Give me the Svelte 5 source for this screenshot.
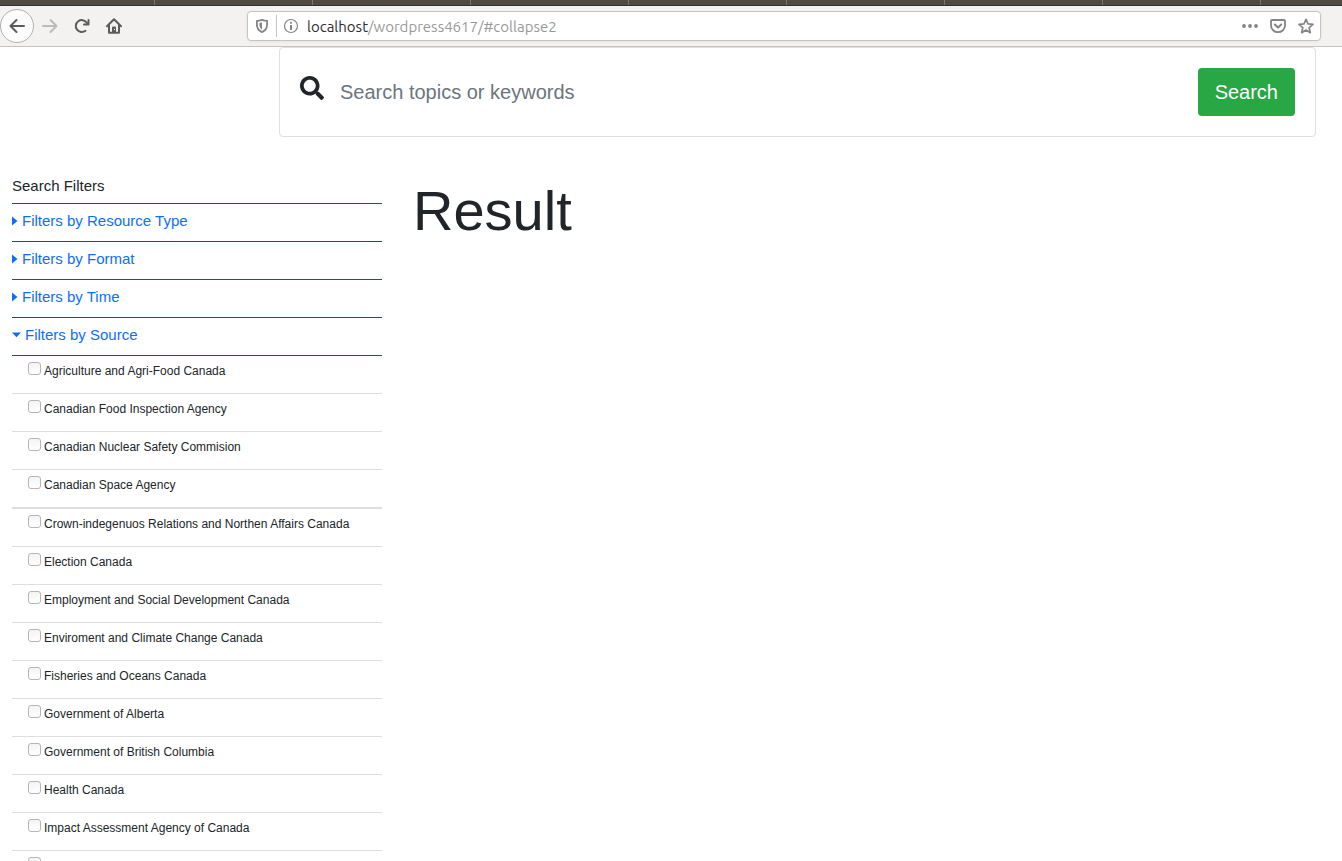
<script>
  const collapsed = ['Filters by Resource Type', 'Filters by Format', 'Filters by Time'];

  const groups = [
    [
      'Agriculture and Agri-Food Canada',
      'Canadian Food Inspection Agency',
      'Canadian Nuclear Safety Commision',
      'Canadian Space Agency',
    ],
    [
      'Crown-indegenuos Relations and Northen Affairs Canada',
      'Election Canada',
      'Employment and Social Development Canada',
      'Enviroment and Climate Change Canada',
      'Fisheries and Oceans Canada',
      'Government of Alberta',
      'Government of British Columbia',
      'Health Canada',
      'Impact Assessment Agency of Canada',
      '',
    ],
  ];
</script>

<div class="window">
  <div class="tabs"></div>

  <header class="toolbar">
    <nav class="nav" aria-label="Browser">
      <button class="back" aria-label="Back">
        <svg width="16" height="16" viewBox="0 0 16 16"><path d="M15 8H2M7.500 2L1.500 8l6 6" fill="none" stroke="#5c5c5b" stroke-width="2" stroke-linecap="round" stroke-linejoin="round" /></svg>
      </button>
      <button aria-label="Forward">
        <svg width="16" height="16" viewBox="0 0 16 16"><path d="M1 8h13M8.500 2l6 6-6 6" fill="none" stroke="#bcbbba" stroke-width="2" stroke-linecap="round" stroke-linejoin="round" /></svg>
      </button>
      <button aria-label="Reload">
        <svg width="16" height="16" viewBox="0 0 16 16" fill="none" stroke="#5c5c5b" stroke-width="2" stroke-linecap="round" stroke-linejoin="round"><path d="M11.500 12.800A6 6 0 1 1 12.700 4.600L14 6" /><path d="M14.500 2v4.500H10" /></svg>
      </button>
      <button aria-label="Home">
        <svg width="16" height="16" viewBox="0 0 16 16"><path d="M1 8.300L8 1.300l7 7M3 7v7.800h10V7" fill="none" stroke="#5c5c5b" stroke-width="2" stroke-linecap="round" stroke-linejoin="round" /><path d="M6 15V9.500Q6 8.500 7 8.500h2Q10 8.500 10 9.500V15z" fill="#5c5c5b" /><path d="M8.500 10.800v1.200" stroke="#f3f2f0" /></svg>
      </button>
    </nav>

    <div class="address">
      <svg width="14" height="16" viewBox="0 0 14 16"><path d="M7 1.800C5.500 2.300 3.700 2.700 1.900 2.800v3.700c0 3.400 1.600 6.100 5.100 7.600 3.500-1.500 5.100-4.200 5.100-7.600V2.800C10.300 2.700 8.500 2.300 7 1.800z" fill="none" stroke="#858584" stroke-width="1.800" stroke-linejoin="round" /><path d="M7 4.500v7.200C5 10.400 4.400 8.500 4.400 6.500V5z" fill="#858584" /></svg>
      <span class="divider"></span>
      <svg width="16" height="16" viewBox="0 0 16 16"><circle cx="8" cy="8" r="6.500" fill="none" stroke="#858584" stroke-width="1.200" /><circle cx="8" cy="4.800" r="1.100" fill="#858584" /><path d="M8 7v5" stroke="#858584" stroke-width="2" /></svg>
      <span class="url"><b>localhost</b>/wordpress4617/#collapse2</span>
      <div class="actions">
        <svg width="16" height="16" viewBox="0 0 16 16" fill="#858584"><circle cx="2" cy="8" r="1.900" /><circle cx="8" cy="8" r="1.900" /><circle cx="14" cy="8" r="1.900" /></svg>
        <svg width="16" height="16" viewBox="0 0 16 16" fill="none" stroke="#858584" stroke-linecap="round" stroke-linejoin="round"><path d="M2 2h12q1 0 1 1v4.500a7 6.700 0 0 1-14 0V3q0-1 1-1z" stroke-width="1.800" /><path d="M4.800 6.500L8 9.500l3.200-3" stroke-width="2" /></svg>
        <svg width="16" height="16" viewBox="0 0 16 16"><path d="M8 1.300l2 4.600 5 .5-3.800 3.300 1.100 5L8 12.100l-4.300 2.600 1.100-5L1 6.400l5-.5z" fill="none" stroke="#858584" stroke-width="1.700" stroke-linejoin="round" /></svg>
      </div>
    </div>
  </header>

  <form class="search" onsubmit={(e) => e.preventDefault()}>
    <svg class="glass" width="24" height="24" viewBox="0 0 512 512" fill="#212529"><path d="M505 442.700L405.300 343c-4.500-4.500-10.600-7-17-7H372c27.600-35.300 44-79.700 44-128C416 93.100 322.900 0 208 0S0 93.100 0 208s93.100 208 208 208c48.300 0 92.700-16.400 128-44v16.300c0 6.400 2.500 12.500 7 17l99.700 99.700c9.400 9.400 24.600 9.400 33.900 0l28.300-28.300c9.400-9.400 9.400-24.600.1-34zM208 336c-70.700 0-128-57.200-128-128 0-70.700 57.200-128 128-128 70.700 0 128 57.200 128 128 0 70.700-57.200 128-128 128z" /></svg>
    <input type="search" aria-label="Search" placeholder="Search topics or keywords" />
    <button type="submit">Search</button>
  </form>

  <main class="content">
    <aside>
      <h2>Search Filters</h2>
      {#each collapsed as title}
        <div class="filter">
          <a href="#collapse"><svg width="6" height="10" viewBox="0 0 6 10"><path d="M0 0.500L5.500 5 0 9.500z" fill="currentColor" /></svg>{title}</a>
        </div>
      {/each}
      <div class="filter">
        <a href="#collapse2"><svg width="9" height="10" viewBox="0 0 9 10"><path d="M0 2.500h9L4.500 7.300z" fill="currentColor" /></svg>Filters by Source</a>
      </div>
      {#each groups as group}
        <ul>
          {#each group as source}
            <li><label><input type="checkbox" /><span>{source}</span></label></li>
          {/each}
        </ul>
      {/each}
    </aside>
    <section>
      <h1>Result</h1>
    </section>
  </main>
</div>

<style>
  :global(body) {
    margin: 0;
    background: #fff;
  }
  * {
    box-sizing: border-box;
  }
  .window {
    height: 100vh;
    overflow: hidden;
    color: #212529;
    font-family: "Liberation Sans", Arial, sans-serif;
  }
  .tabs {
    height: 6px;
    border-bottom: 1px solid #37302e;
    background: repeating-linear-gradient(90deg, #4f4a42 0 154px, #7b776f 154px 155px, #4f4a42 155px 158px);
  }
  .toolbar {
    display: flex;
    align-items: center;
    height: 41px;
    padding-right: 21px;
    border-bottom: 1px solid #c5c3c0;
    background: #f3f2f0;
  }
  .nav {
    display: flex;
    align-items: center;
    width: 247px;
  }
  .nav button {
    display: grid;
    place-items: center;
    width: 32px;
    height: 32px;
    padding: 0;
    border: 0;
    background: none;
  }
  .nav .back {
    width: 34px;
    height: 34px;
    border: 1px solid #b2b1af;
    border-radius: 50%;
    background: #fcfcfc;
  }
  .address {
    display: flex;
    flex: 1;
    align-items: center;
    height: 30px;
    padding: 0 6px;
    border: 1px solid #c5c3c0;
    border-radius: 4px;
    background: #fff;
    box-shadow: 0 1px 3px rgb(0 0 0 / 6%);
  }
  .address > svg:first-child {
    margin-left: 1px;
  }
  .divider {
    width: 1px;
    height: 22px;
    margin: 0 6px 0 7px;
    background: #c5c3c0;
  }
  .url {
    margin-left: 8px;
    color: #999;
    font-family: Ubuntu, "Open Sans", sans-serif;
    font-size: 15px;
  }
  .url b {
    color: #2e2e2e;
    font-weight: 400;
  }
  .actions {
    display: flex;
    gap: 12px;
    margin-left: auto;
  }
  .search {
    display: flex;
    align-items: center;
    height: 90px;
    margin: 0 26px 0 279px;
    padding: 0 20px;
    border: 1px solid #dfdfdf;
    border-radius: 4px;
  }
  .glass {
    margin-bottom: 8px;
  }
  .search input {
    flex: 1;
    min-width: 0;
    height: 48px;
    padding: 0 16px;
    border: 0;
    background: none;
    color: #495057;
    font: 20px "Liberation Sans", Arial, sans-serif;
    appearance: none;
  }
  .search input::placeholder {
    color: #6c757d;
  }
  .search button {
    height: 48px;
    padding: 0 17px;
    border: 0;
    border-radius: 4px;
    background: #28a745;
    color: #fff;
    font: 20px "Liberation Sans", Arial, sans-serif;
  }
  .content {
    display: grid;
    grid-template-columns: 370px 1fr;
    column-gap: 31px;
    padding: 40px 12px 0;
  }
  h2 {
    height: 27px;
    margin: 0;
    border-bottom: 1px solid #2f4f4f;
    font-size: 15px;
    font-weight: 400;
    line-height: 18px;
  }
  .filter {
    height: 38px;
    padding-top: 8px;
    border-bottom: 1px solid #2f4f4f;
    font-size: 15px;
    line-height: 18px;
  }
  .filter a {
    display: inline-flex;
    gap: 4px;
    align-items: center;
    color: #0d6efd;
    text-decoration: none;
  }
  ul {
    margin: 0;
    padding: 0;
    list-style: none;
  }
  ul + ul {
    border-top: 1px solid #dedede;
  }
  li {
    height: 38px;
    padding: 6px 0 0 16px;
    border-bottom: 1px solid #dedede;
    font-size: 12px;
  }
  label {
    display: flex;
    gap: 3px;
    align-items: flex-start;
  }
  label span {
    line-height: 18px;
  }
  li input {
    width: 13px;
    height: 13px;
    margin: 0;
    border: 1px solid #b5b5b5;
    border-radius: 3px;
    background: linear-gradient(#f4f4f4, #fff);
    appearance: none;
  }
  h1 {
    margin: 0;
    font-size: 56px;
    font-weight: 400;
    line-height: 68px;
  }
</style>
